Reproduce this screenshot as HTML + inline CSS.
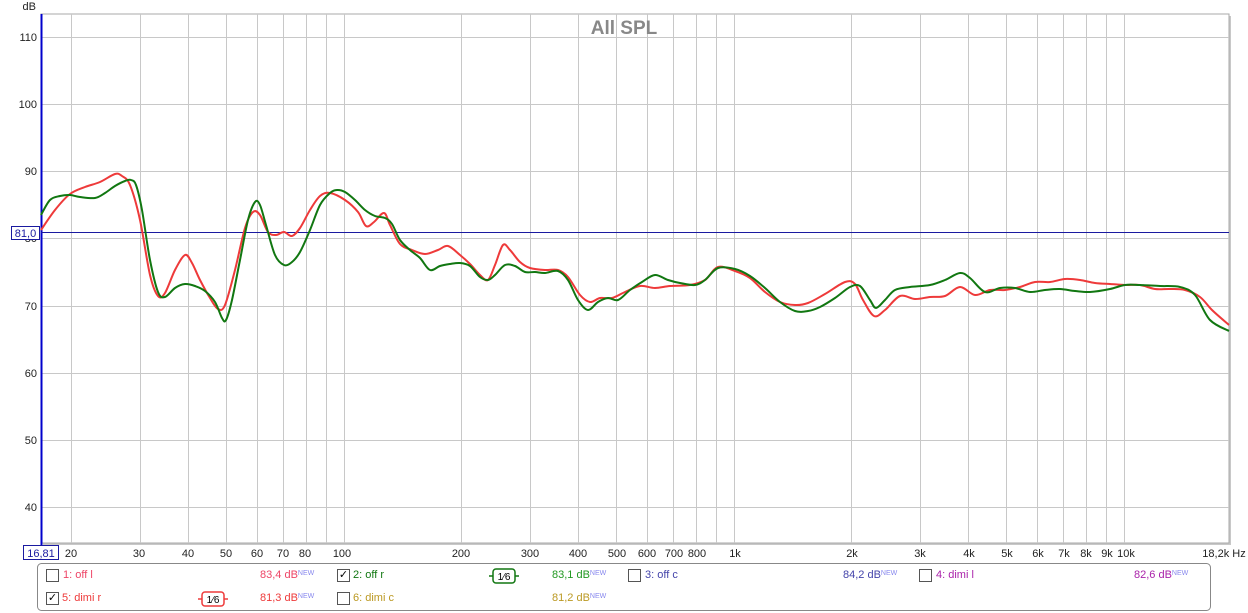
<!DOCTYPE html>
<html><head><meta charset="utf-8"><style>
html,body{margin:0;padding:0;background:#fff;width:1248px;height:613px;overflow:hidden;font-family:"Liberation Sans",Arial,sans-serif}
.lg{position:absolute;font-size:11px;line-height:13px}
.cb{position:absolute;width:11px;height:11px;border:1px solid #555;background:#fff}
sup{font-size:7px;color:#8888ee;vertical-align:top;position:relative;top:-2px}
</style></head><body>
<svg id="s" width="1248" height="613" style="position:absolute;left:0;top:0" font-family="Liberation Sans, Arial, sans-serif">
<rect x="43" y="16" width="1188" height="529" fill="#c8c8c8"/>
<rect x="41" y="14" width="1188" height="529" fill="#fff" stroke="#a8a8a8" stroke-width="1"/>
<g stroke="#c8c8c8" stroke-width="1">
<line x1="71.5" y1="14" x2="71.5" y2="543"/><line x1="140.5" y1="14" x2="140.5" y2="543"/><line x1="188.5" y1="14" x2="188.5" y2="543"/><line x1="226.5" y1="14" x2="226.5" y2="543"/><line x1="257.5" y1="14" x2="257.5" y2="543"/><line x1="283.5" y1="14" x2="283.5" y2="543"/><line x1="306.5" y1="14" x2="306.5" y2="543"/><line x1="326.5" y1="14" x2="326.5" y2="543"/><line x1="344.5" y1="14" x2="344.5" y2="543"/><line x1="461.5" y1="14" x2="461.5" y2="543"/><line x1="530.5" y1="14" x2="530.5" y2="543"/><line x1="578.5" y1="14" x2="578.5" y2="543"/><line x1="616.5" y1="14" x2="616.5" y2="543"/><line x1="647.5" y1="14" x2="647.5" y2="543"/><line x1="673.5" y1="14" x2="673.5" y2="543"/><line x1="696.5" y1="14" x2="696.5" y2="543"/><line x1="716.5" y1="14" x2="716.5" y2="543"/><line x1="734.5" y1="14" x2="734.5" y2="543"/><line x1="851.5" y1="14" x2="851.5" y2="543"/><line x1="920.5" y1="14" x2="920.5" y2="543"/><line x1="968.5" y1="14" x2="968.5" y2="543"/><line x1="1006.5" y1="14" x2="1006.5" y2="543"/><line x1="1037.5" y1="14" x2="1037.5" y2="543"/><line x1="1063.5" y1="14" x2="1063.5" y2="543"/><line x1="1086.5" y1="14" x2="1086.5" y2="543"/><line x1="1106.5" y1="14" x2="1106.5" y2="543"/><line x1="1124.5" y1="14" x2="1124.5" y2="543"/>
<line x1="41" y1="37.5" x2="1229" y2="37.5"/><line x1="41" y1="104.5" x2="1229" y2="104.5"/><line x1="41" y1="171.5" x2="1229" y2="171.5"/><line x1="41" y1="238.5" x2="1229" y2="238.5"/><line x1="41" y1="306.5" x2="1229" y2="306.5"/><line x1="41" y1="373.5" x2="1229" y2="373.5"/><line x1="41" y1="440.5" x2="1229" y2="440.5"/><line x1="41" y1="507.5" x2="1229" y2="507.5"/>
</g>
<text x="624" y="34" font-size="19" font-weight="bold" fill="#888" text-anchor="middle">All SPL</text>
<line x1="41.5" y1="14" x2="41.5" y2="545" stroke="#0000cc" stroke-width="2"/>
<line x1="41" y1="232.5" x2="1229" y2="232.5" stroke="#1a1aa0" stroke-width="1"/>
<polyline class="c" fill="none" stroke="#ee3a3a" stroke-width="2" stroke-linejoin="round" points="41,230 55,210 70,194 85,187 100,182 115,174 122,176 130,185 140,220 150,275 158,296 165,293 175,270 185,255 192,263 200,280 210,298 218,309 225,305 235,270 245,228 253,212 260,215 268,232 276,235 284,232 292,236 300,228 310,210 320,196 330,193 345,200 358,212 366,226 374,222 384,213 390,225 400,244 412,250 425,254 438,250 448,246 460,255 470,264 480,275 488,280 495,265 503,245 510,250 520,262 530,268 545,270 558,270 568,277 580,295 590,302 600,298 612,298 625,292 640,286 655,288 670,286 690,285 705,280 718,267 735,271 750,278 765,292 780,302 795,305 808,303 825,294 845,282 855,284 863,300 874,316 885,310 900,296 915,299 930,297 945,296 960,287 975,295 990,290 1005,290 1020,287 1035,282 1050,282 1065,279 1080,280 1095,283 1110,284 1125,285 1140,285 1155,289 1170,289 1185,290 1200,297 1212,310 1229,325"/>
<polyline class="c" fill="none" stroke="#117711" stroke-width="2" stroke-linejoin="round" points="41,215 50,200 60,196 70,195 80,197 95,198 105,193 115,186 125,181 131,180 136,185 142,210 150,260 158,292 165,297 175,288 185,284 195,286 205,291 215,302 222,318 226,320 232,300 240,260 248,220 255,202 260,205 266,225 275,255 284,265 292,262 300,252 310,230 320,205 330,193 337,190 345,192 355,200 365,210 375,216 385,218 392,224 400,240 410,250 420,258 430,270 440,266 450,264 460,263 470,266 480,277 488,280 495,275 505,265 515,266 525,272 535,272 545,273 558,271 568,280 578,300 588,310 598,302 608,298 618,300 630,290 642,282 655,275 668,280 680,283 695,285 705,280 718,268 735,269 750,276 765,288 780,302 795,311 808,311 820,307 835,298 850,287 860,286 870,300 876,308 885,300 895,290 910,287 930,285 945,280 960,273 970,278 985,292 1000,288 1015,288 1030,292 1045,290 1060,289 1075,291 1090,292 1110,289 1125,285 1140,285 1160,286 1180,287 1195,295 1210,320 1229,331"/>
<g font-size="11" fill="#222" text-anchor="end">
<text x="36" y="10">dB</text><text x="37" y="41">110</text><text x="37" y="108">100</text><text x="37" y="175">90</text><text x="37" y="242">80</text><text x="37" y="310">70</text><text x="37" y="377">60</text><text x="37" y="444">50</text><text x="37" y="511">40</text>
</g>
<rect x="11.5" y="226.5" width="28" height="13" fill="#fff" stroke="#1a1aa0"/>
<text x="25.5" y="237" font-size="11" fill="#1a1aa0" text-anchor="middle">81,0</text>
<rect x="23.5" y="545.5" width="35" height="14" fill="#fff" stroke="#1a1aa0"/>
<text x="41" y="557" font-size="11" fill="#1a1aa0" text-anchor="middle">16,81</text>
<g font-size="11" fill="#222" text-anchor="middle">
<text x="71" y="557">20</text><text x="139" y="557">30</text><text x="188" y="557">40</text><text x="226" y="557">50</text><text x="257" y="557">60</text><text x="283" y="557">70</text><text x="305" y="557">80</text><text x="342" y="557">100</text><text x="461" y="557">200</text><text x="530" y="557">300</text><text x="578" y="557">400</text><text x="617" y="557">500</text><text x="647" y="557">600</text><text x="674" y="557">700</text><text x="697" y="557">800</text><text x="735" y="557">1k</text><text x="852" y="557">2k</text><text x="920" y="557">3k</text><text x="969" y="557">4k</text><text x="1007" y="557">5k</text><text x="1038" y="557">6k</text><text x="1064" y="557">7k</text><text x="1086" y="557">8k</text><text x="1107" y="557">9k</text><text x="1126" y="557">10k</text><text x="1224" y="557">18,2k Hz</text>
</g>
<rect x="37.5" y="563.5" width="1173" height="47" rx="4" fill="#fff" stroke="#888"/>
<g stroke-width="1.5" fill="#fff">
<line x1="489" y1="576" x2="493" y2="576" stroke="#117711"/><line x1="515" y1="576" x2="519" y2="576" stroke="#117711"/>
<rect x="493" y="569" width="22" height="14" rx="3" stroke="#117711"/>
<line x1="198" y1="599" x2="202" y2="599" stroke="#ee3a3a"/><line x1="224" y1="599" x2="228" y2="599" stroke="#ee3a3a"/>
<rect x="202" y="592" width="22" height="14" rx="3" stroke="#ee3a3a"/>
</g>
<text x="504" y="580" font-size="10" fill="#000" text-anchor="middle">1⁄6</text>
<text x="213" y="603" font-size="10" fill="#000" text-anchor="middle">1⁄6</text>
</svg>
<div class="cb" style="left:46px;top:569px"></div><div class="lg" style="left:63px;top:569px;color:#ee4466">1: off l</div>
<div class="lg" style="left:260px;top:569px;color:#ee4466">83,4 dB<sup>NEW</sup></div>
<div class="cb" style="left:337px;top:569px;font-size:11px;line-height:11px;text-align:center">✓</div><div class="lg" style="left:353px;top:569px;color:#117711">2: off r</div>
<div class="lg" style="left:552px;top:569px;color:#229922">83,1 dB<sup>NEW</sup></div>
<div class="cb" style="left:628px;top:569px"></div><div class="lg" style="left:645px;top:569px;color:#4444aa">3: off c</div>
<div class="lg" style="left:843px;top:569px;color:#4444aa">84,2 dB<sup>NEW</sup></div>
<div class="cb" style="left:919px;top:569px"></div><div class="lg" style="left:936px;top:569px;color:#aa22aa">4: dimi l</div>
<div class="lg" style="left:1134px;top:569px;color:#aa22aa">82,6 dB<sup>NEW</sup></div>
<div class="cb" style="left:46px;top:592px;font-size:11px;line-height:11px;text-align:center">✓</div><div class="lg" style="left:62px;top:592px;color:#ee3a3a">5: dimi r</div>
<div class="lg" style="left:260px;top:592px;color:#ee3a3a">81,3 dB<sup>NEW</sup></div>
<div class="cb" style="left:337px;top:592px"></div><div class="lg" style="left:353px;top:592px;color:#bb9922">6: dimi c</div>
<div class="lg" style="left:552px;top:592px;color:#bb9922">81,2 dB<sup>NEW</sup></div>
<script>
document.querySelectorAll('polyline.c').forEach(function(pl){
  var p=pl.getAttribute('points').trim().split(/\s+/).map(function(s){return s.split(',').map(Number);});
  var d='M'+p[0][0]+','+p[0][1];
  for(var i=0;i<p.length-1;i++){
    var p0=p[i-1]||p[i],p1=p[i],p2=p[i+1],p3=p[i+2]||p2;
    var c1x=p1[0]+(p2[0]-p0[0])/6,c1y=p1[1]+(p2[1]-p0[1])/6;
    var c2x=p2[0]-(p3[0]-p1[0])/6,c2y=p2[1]-(p3[1]-p1[1])/6;
    d+=' C'+c1x.toFixed(1)+','+c1y.toFixed(1)+' '+c2x.toFixed(1)+','+c2y.toFixed(1)+' '+p2[0]+','+p2[1];
  }
  var path=document.createElementNS('http://www.w3.org/2000/svg','path');
  path.setAttribute('d',d);path.setAttribute('fill','none');
  path.setAttribute('stroke',pl.getAttribute('stroke'));path.setAttribute('stroke-width','2');
  pl.parentNode.replaceChild(path,pl);
});
</script>
</body></html>
